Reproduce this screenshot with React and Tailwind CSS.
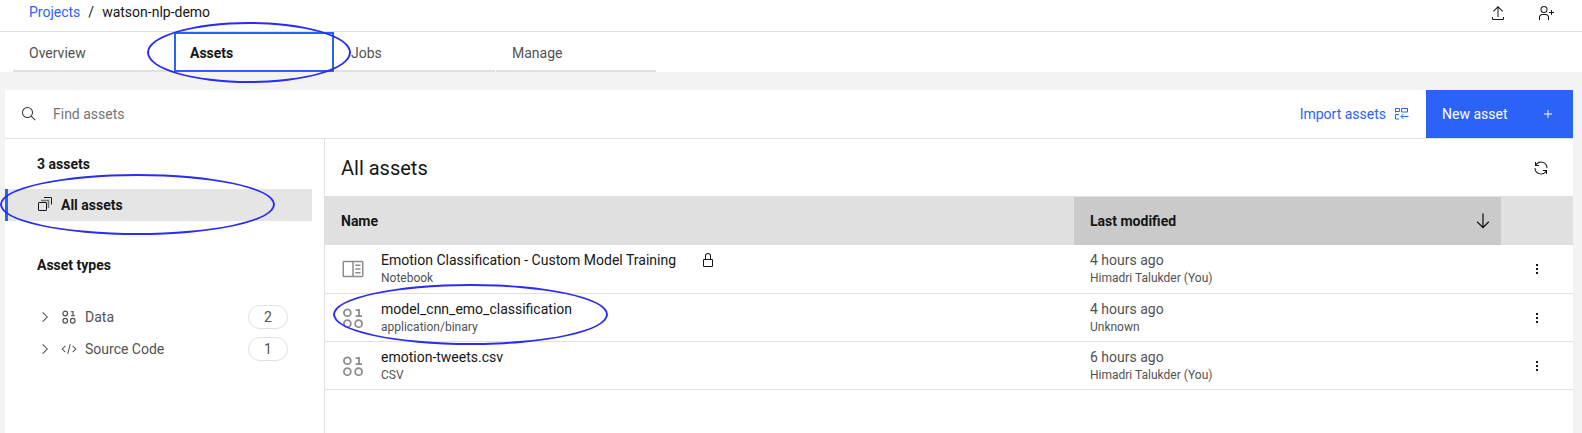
const P = {
  upload: "M26 24v4H6V24H4v4a2 2 0 0 0 2 2H26a2 2 0 0 0 2-2V24zM6 12l1.41 1.41L15 5.83V24h2V5.83l7.59 7.58L26 12 16 2z",
  addUser: "M32 14H28V10H26v4H22v2h4v4h2V16h4zM12 4A5 5 0 1 1 7 9a5 5 0 0 1 5-5m0-2a7 7 0 1 0 7 7A7 7 0 0 0 12 2zM22 30H20V25a5 5 0 0 0-5-5H9a5 5 0 0 0-5 5v5H2V25a7 7 0 0 1 7-7h6a7 7 0 0 1 7 7z",
  search: "M29 27.586l-7.552-7.552a11.018 11.018 0 1 0-1.414 1.414L27.586 29zM4 13a9 9 0 1 1 9 9A9.01 9.01 0 0 1 4 13z",
  renew: "M12 10H6.78A11 11 0 0 1 27 16h2A13 13 0 0 0 6 7.68V4H4v8h8zM20 22h5.22A11 11 0 0 1 5 16H3a13 13 0 0 0 23 8.32V28h2V20H20z",
  lock: "M24 14H22V8A6 6 0 0 0 10 8v6H8a2 2 0 0 0-2 2V28a2 2 0 0 0 2 2H24a2 2 0 0 0 2-2V16A2 2 0 0 0 24 14zM12 8a4 4 0 0 1 8 0v6H12zM24 28H8V16H24z",
  code: "M31 16L24 23 22.59 21.59 28.17 16 22.59 10.41 24 9zM1 16L8 9 9.41 10.41 3.83 16 9.41 21.59 8 23zM12.42 25.48L17.64 6 19.57 6.52 14.35 26z",
  chevron: "M22 16L12 26 10.6 24.6 19.2 16 10.6 7.4 12 6z",
  arrowDown: "M24.59 16.59L17 24.17V4H15V24.17L7.41 16.59 6 18 16 28 26 18z",
  add: "M17 15V8H15v7H8v2h7v7h2V17h7V15z",
  notebook: "M19 10h7v2h-7zM19 15h7v2h-7zM19 20h7v2h-7zM28 5H4A2 2 0 0 0 2 7V25a2 2 0 0 0 2 2H28a2 2 0 0 0 2-2V7A2 2 0 0 0 28 5zM4 7H15V25H4zM28 25H17V7H28z",
  more: "M14 6h4v4h-4zM14 14h4v4h-4zM14 22h4v4h-4z",
};

function Icon({ name, className = "size-4" }) {
  return (
    <svg viewBox="0 0 32 32" fill="currentColor" aria-hidden="true" className={`shrink-0 ${className}`}>
      <path d={P[name]} />
    </svg>
  );
}

function DataIcon({ className }) {
  return (
    <svg viewBox="0 0 32 32" fill="none" stroke="currentColor" strokeWidth="2.4" aria-hidden="true" className={`shrink-0 ${className}`}>
      <circle cx="8.5" cy="9" r="4.6" />
      <circle cx="8.5" cy="23.5" r="4.6" />
      <circle cx="23.5" cy="23.5" r="4.6" />
      <path d="M19.5 13.5h8.500M24 13.500V4M24 5.500h-4.500" />
    </svg>
  );
}

function StackIcon() {
  return (
    <svg viewBox="0 0 16 16" fill="none" stroke="currentColor" aria-hidden="true" className="size-4 shrink-0">
      <rect x="1.5" y="5.5" width="8" height="8" rx="0.5" />
      <path d="M4 3.500h7.500v7.500" strokeWidth="1.5" opacity="0.55" />
      <path d="M7 .5h7a.5.5 0 0 1 .5.5v6.500" />
    </svg>
  );
}

function ImportIcon() {
  return (
    <svg viewBox="0 0 16 16" fill="none" stroke="currentColor" aria-hidden="true" className="size-4 shrink-0">
      <path d="M1.500 6.500V2.500h4v3h-4M7.500 2.500h6v3.500h-6zM5 8.500H1.500v4.500h3.500M14.500 10.500H7M9.500 8l-2.500 2.500 2.500 2.500" />
    </svg>
  );
}

const tabs = ["Overview", "Assets", "Jobs", "Manage"];
const types = [
  { name: "Data", count: 2 },
  { name: "Source Code", count: 1 },
];
const rows = [
  { name: "Emotion Classification - Custom Model Training", kind: "Notebook", time: "4 hours ago", by: "Himadri Talukder (You)", locked: true },
  { name: "model_cnn_emo_classification", kind: "application/binary", time: "4 hours ago", by: "Unknown", marked: true },
  { name: "emotion-tweets.csv", kind: "CSV", time: "6 hours ago", by: "Himadri Talukder (You)" },
];

function Ring({ className }) {
  return <span aria-hidden="true" className={`pointer-events-none absolute z-10 rounded-[50%] border-2 border-[#2b2bf5] ${className}`} />;
}

export default function App() {
  return (
    <div className="flex min-h-screen flex-col bg-[#f3f3f3] font-['Roboto','Liberation_Sans',sans-serif] text-sm text-[#161616]">
      <header className="bg-white">
        <div className="flex h-8 items-start justify-between border-b border-[#e0e0e0] pr-7 pl-[29px]">
          <nav aria-label="Breadcrumb" className="flex gap-2 pt-0.5 leading-5">
            <a href="#projects" className="text-[#2b62f8]">Projects</a>
            <span>/</span>
            <span>watson-nlp-demo</span>
          </nav>
          <div className="flex gap-8 pt-[5px]">
            <button aria-label="Export" className="block"><Icon name="upload" /></button>
            <button aria-label="Add collaborator" className="block"><Icon name="addUser" /></button>
          </div>
        </div>
        <div role="tablist" className="flex h-10 gap-px pl-[13px]">
          {tabs.map((t) => (
            <div key={t} className="relative w-40">
              <button
                role="tab"
                aria-selected={t === "Assets"}
                className={
                  t === "Assets"
                    ? "h-full w-full border-2 border-[#2b62f8] px-3.5 pt-0.5 text-left font-bold"
                    : "h-full w-full border-b-2 border-[#e0e0e0] px-4 pt-1 text-left text-[#525252]"
                }
              >
                {t}
              </button>
              {t === "Assets" && <Ring className="-top-2.5 -left-[27px] h-[61px] w-[204px]" />}
            </div>
          ))}
        </div>
      </header>

      <main className="mt-[18px] mr-[9px] ml-[5px] flex grow flex-col bg-white">
        <div className="flex h-[49px] border-b border-[#e0e0e0]">
          <label className="flex grow items-center gap-4 pl-4">
            <Icon name="search" className="size-4 text-[#393939]" />
            <input type="text" aria-label="Find assets" placeholder="Find assets" className="grow outline-none placeholder:text-[#757575]" />
          </label>
          <button className="flex items-center gap-2 px-4 text-[#2b62f8]">
            Import assets <ImportIcon />
          </button>
          <button className="flex w-[147px] items-center justify-between bg-[#2b62f8] pr-[17px] pl-4 text-white">
            New asset <Icon name="add" />
          </button>
        </div>

        <div className="flex grow">
          <aside className="w-80 shrink-0 border-r border-[#e0e0e0] pt-[15px] pr-3">
            <h2 className="pl-8 leading-5 font-bold">3 assets</h2>
            <div className="relative mt-[15px]">
              <a href="#all" className="flex h-8 items-center gap-2 border-l-3 border-[#2b62f8] bg-[#e5e5e5] pl-[29px] font-bold">
                <StackIcon /> All assets
              </a>
              <Ring className="-top-[15px] -left-[5px] h-[61px] w-[275px]" />
            </div>
            <h2 className="mt-[34px] pl-8 leading-5 font-bold">Asset types</h2>
            <ul className="mt-[26px] pr-6 pl-8 text-[#525252]">
              {types.map((t) => (
                <li key={t.name} className="flex h-8 items-center gap-2">
                  <button aria-label={`Expand ${t.name}`}><Icon name="chevron" /></button>
                  {t.name === "Data" ? <DataIcon className="size-4" /> : <Icon name="code" />}
                  <span className="grow">{t.name}</span>
                  <span className="flex h-6 w-10 items-center justify-center rounded-full border border-[#e0e0e0]">{t.count}</span>
                </li>
              ))}
            </ul>
          </aside>

          <section className="grow">
            <div className="flex h-[57px] items-center justify-between pr-6 pl-4">
              <h1 className="text-xl">All assets</h1>
              <button aria-label="Refresh"><Icon name="renew" /></button>
            </div>
            <table className="w-full table-fixed border-separate border-spacing-0 text-left">
              <thead>
                <tr className="h-[49px] bg-[#e0e0e0]">
                  <th className="pl-4 font-bold">Name</th>
                  <th aria-sort="descending" className="w-[427px] border-t border-[#e0e0e0] bg-[#cacaca] pr-2 pl-4 font-bold">
                    <button className="flex w-full items-center justify-between">
                      Last modified <Icon name="arrowDown" className="size-5" />
                    </button>
                  </th>
                  <th className="w-[72px]" aria-label="Actions" />
                </tr>
              </thead>
              <tbody className="[&_td]:border-b [&_td]:border-[#e0e0e0]">
                {rows.map((r) => (
                  <tr key={r.name} className="h-12 first:h-[49px]">
                    <td className="relative pl-4">
                      <div className="flex items-center gap-4">
                        {r.kind === "Notebook" ? (
                          <Icon name="notebook" className="size-6 text-[#8d8d8d]" />
                        ) : (
                          <DataIcon className="size-6 text-[#8d8d8d]" />
                        )}
                        <div className="pb-0.5">
                          <div className="flex h-5 items-center gap-6">
                            {r.name}
                            {r.locked && <Icon name="lock" />}
                          </div>
                          <div className="text-xs text-[#525252]">{r.kind}</div>
                        </div>
                      </div>
                      {r.marked && <Ring className="-top-2.5 left-2 h-[61px] w-[275px]" />}
                    </td>
                    <td className="pb-0.5 pl-4 text-[#525252]">
                      <div className="leading-5">{r.time}</div>
                      <div className="text-xs">{r.by}</div>
                    </td>
                    <td>
                      <button aria-label={`Actions for ${r.name}`} className="mx-auto block"><Icon name="more" /></button>
                    </td>
                  </tr>
                ))}
              </tbody>
            </table>
          </section>
        </div>
      </main>
    </div>
  );
}
